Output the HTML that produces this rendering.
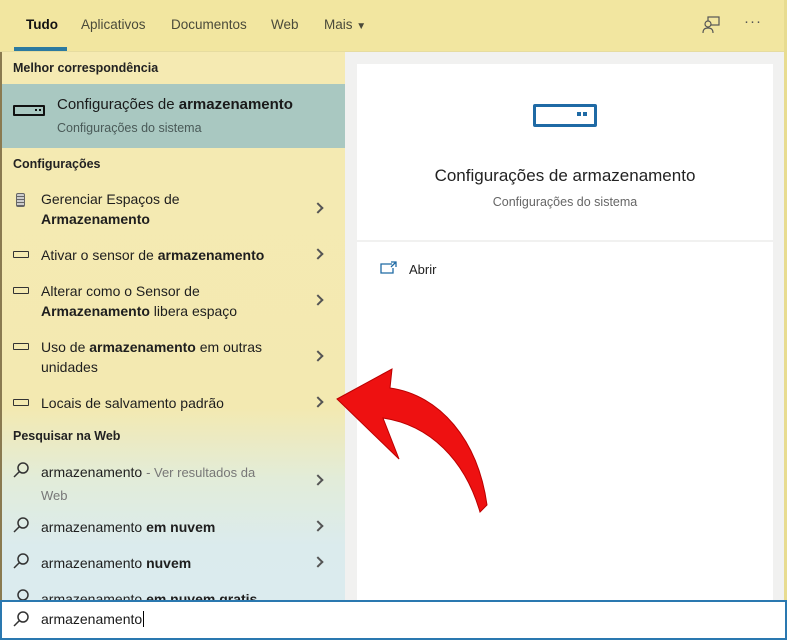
<!DOCTYPE html>
<html><head><style>
*{margin:0;padding:0;box-sizing:border-box}
body{width:787px;height:640px;overflow:hidden;position:relative;font-family:"Liberation Sans",sans-serif;color:#1a1a1a;background:#f1f1f0}
.a{position:absolute;white-space:nowrap}
#top{left:0;top:0;width:787px;height:52px;background:#f2e6a0;border-bottom:1px solid #e6dca0}
.tab{top:17px;font-size:13.5px;color:#4a4a3a}
#left{left:0;top:52px;width:345px;height:548px;background:linear-gradient(#f5eab2 0%,#f3e9b1 65%,#e2ecd9 78%,#dbebed 90%,#dbebee 100%);border-left:2px solid #8a7a50}
.h{font-size:12.5px;font-weight:bold;color:#222;left:13px}
.it{font-size:14px;left:41px;line-height:20px;color:#1e1e1e}
.chev{left:314px;width:8px;height:8px;border-top:2px solid #555;border-right:2px solid #555;transform:rotate(45deg)}
.ic{left:13px;width:16px;height:7px;border:1.5px solid #333;border-radius:1px}
.gray{color:#777}
</style></head><body>
<div class="a" id="top"></div>
<div class="a tab" style="left:26px;color:#111;font-weight:bold">Tudo</div>
<div class="a" style="left:14px;top:47px;width:53px;height:4px;background:#2c7aa0"></div>
<div class="a tab" style="left:81px">Aplicativos</div>
<div class="a tab" style="left:171px">Documentos</div>
<div class="a tab" style="left:271px">Web</div>
<div class="a tab" style="left:324px">Mais <span style="font-size:10px">▼</span></div>
<svg class="a" style="left:701px;top:15px" width="20" height="20" viewBox="0 0 20 20" fill="none" stroke="#555" stroke-width="1.2"><rect x="7" y="2" width="11" height="8"/><circle cx="7" cy="9" r="3" fill="#f2e6a0"/><path d="M2 18c0-4 2-5 5-5s5 1 5 5"/></svg>
<div class="a" style="left:744px;top:13px;font-size:15px;color:#555;letter-spacing:1px">···</div>
<div class="a" style="left:784px;top:0;width:3px;height:640px;background:#e8dc90"></div>

<div class="a" id="left"></div>
<div class="a h" style="top:61px">Melhor correspondência</div>
<div class="a" style="left:2px;top:84px;width:343px;height:64px;background:#a9c8c1"></div>
<div class="a" style="left:13px;top:105px;width:32px;height:11px;border:2px solid #111;border-radius:1px"><div style="position:absolute;right:2px;top:2px;width:6px;height:2px;border-left:2px solid #111;border-right:2px solid #111"></div></div>
<div class="a" style="left:57px;top:96px;font-size:15px">Configurações de <b>armazenamento</b></div>
<div class="a" style="left:57px;top:121px;font-size:12.5px;color:#4a5a58">Configurações do sistema</div>
<div class="a h" style="top:157px">Configurações</div>

<div class="a" style="left:16px;top:193px;width:9px;height:14px;border:1.5px solid #666;border-radius:2px;background:repeating-linear-gradient(#ccc 0 2px,#666 2px 3px)"></div>
<div class="a it" style="top:189px">Gerenciar Espaços de<br><b>Armazenamento</b></div>
<div class="a chev" style="top:204px"></div>

<div class="a ic" style="top:251px"></div>
<div class="a it" style="top:245px">Ativar o sensor de <b>armazenamento</b></div>
<div class="a chev" style="top:250px"></div>

<div class="a ic" style="top:287px"></div>
<div class="a it" style="top:281px">Alterar como o Sensor de<br><b>Armazenamento</b> libera espaço</div>
<div class="a chev" style="top:296px"></div>

<div class="a ic" style="top:343px"></div>
<div class="a it" style="top:337px">Uso de <b>armazenamento</b> em outras<br>unidades</div>
<div class="a chev" style="top:352px"></div>

<div class="a ic" style="top:399px"></div>
<div class="a it" style="top:393px">Locais de salvamento padrão</div>
<div class="a chev" style="top:398px"></div>

<div class="a h" style="top:429px">Pesquisar na Web</div>
<svg class="a" style="left:12px;top:461px" width="18" height="18" viewBox="0 0 18 18" fill="none" stroke="#333" stroke-width="1.5"><circle cx="11" cy="7" r="5"/><path d="M7.5 10.5L2 16"/></svg>
<div class="a it" style="top:461px;line-height:22px">armazenamento <span class="gray" style="font-size:13px">- Ver resultados da</span><br><span class="gray" style="font-size:13px">Web</span></div>
<div class="a chev" style="top:476px"></div>
<svg class="a" style="left:12px;top:516px" width="18" height="18" viewBox="0 0 18 18" fill="none" stroke="#333" stroke-width="1.5"><circle cx="11" cy="7" r="5"/><path d="M7.5 10.5L2 16"/></svg>
<div class="a it" style="top:517px">armazenamento <b>em nuvem</b></div>
<div class="a chev" style="top:522px"></div>
<svg class="a" style="left:12px;top:552px" width="18" height="18" viewBox="0 0 18 18" fill="none" stroke="#333" stroke-width="1.5"><circle cx="11" cy="7" r="5"/><path d="M7.5 10.5L2 16"/></svg>
<div class="a it" style="top:553px">armazenamento <b>nuvem</b></div>
<div class="a chev" style="top:558px"></div>
<div class="a it" style="top:589px">armazenamento <b>em nuvem gratis</b></div>
<svg class="a" style="left:12px;top:588px" width="18" height="18" viewBox="0 0 18 18" fill="none" stroke="#333" stroke-width="1.5"><circle cx="11" cy="7" r="5"/></svg>

<div class="a" style="left:357px;top:64px;width:416px;height:176px;background:#fff"></div>
<div class="a" style="left:357px;top:242px;width:416px;height:358px;background:#fff"></div>
<div class="a" style="left:533px;top:104px;width:64px;height:23px;border:3px solid #1f6aa5;border-radius:2px"><div style="position:absolute;right:7px;top:5px;width:10px;height:4px;border-left:4px solid #1f6aa5;border-right:4px solid #1f6aa5"></div></div>
<div class="a" style="left:357px;top:166px;width:416px;text-align:center;font-size:17px;color:#222">Configurações de armazenamento</div>
<div class="a" style="left:357px;top:195px;width:416px;text-align:center;font-size:12.5px;color:#666">Configurações do sistema</div>
<svg class="a" style="left:380px;top:261px" width="18" height="14" viewBox="0 0 18 14" fill="none" stroke="#1f6aa5" stroke-width="1.3"><path d="M12 3H1v9h12V7"/><path d="M11 1h5v5M16 1l-5 5"/></svg>
<div class="a" style="left:409px;top:262px;font-size:13px;color:#222">Abrir</div>

<svg class="a" style="left:0;top:0" width="787" height="640" viewBox="0 0 787 640"><path d="M337 399L392 369L390 388C440 395 478 440 487 505L480 512C465 460 430 425 383 418L399 459Z" fill="#ee1111" stroke="#b00" stroke-width="1"/></svg>

<div class="a" style="left:0;top:600px;width:787px;height:40px;background:#fff;border:2px solid #2a78b0"></div>
<svg class="a" style="left:12px;top:610px" width="18" height="18" viewBox="0 0 18 18" fill="none" stroke="#333" stroke-width="1.5"><circle cx="11" cy="7" r="5"/><path d="M7.5 10.5L2 16"/></svg>
<div class="a" style="left:41px;top:611px;font-size:14px">armazenamento<span style="border-left:1px solid #000;margin-left:1px"></span></div>
</body></html>
